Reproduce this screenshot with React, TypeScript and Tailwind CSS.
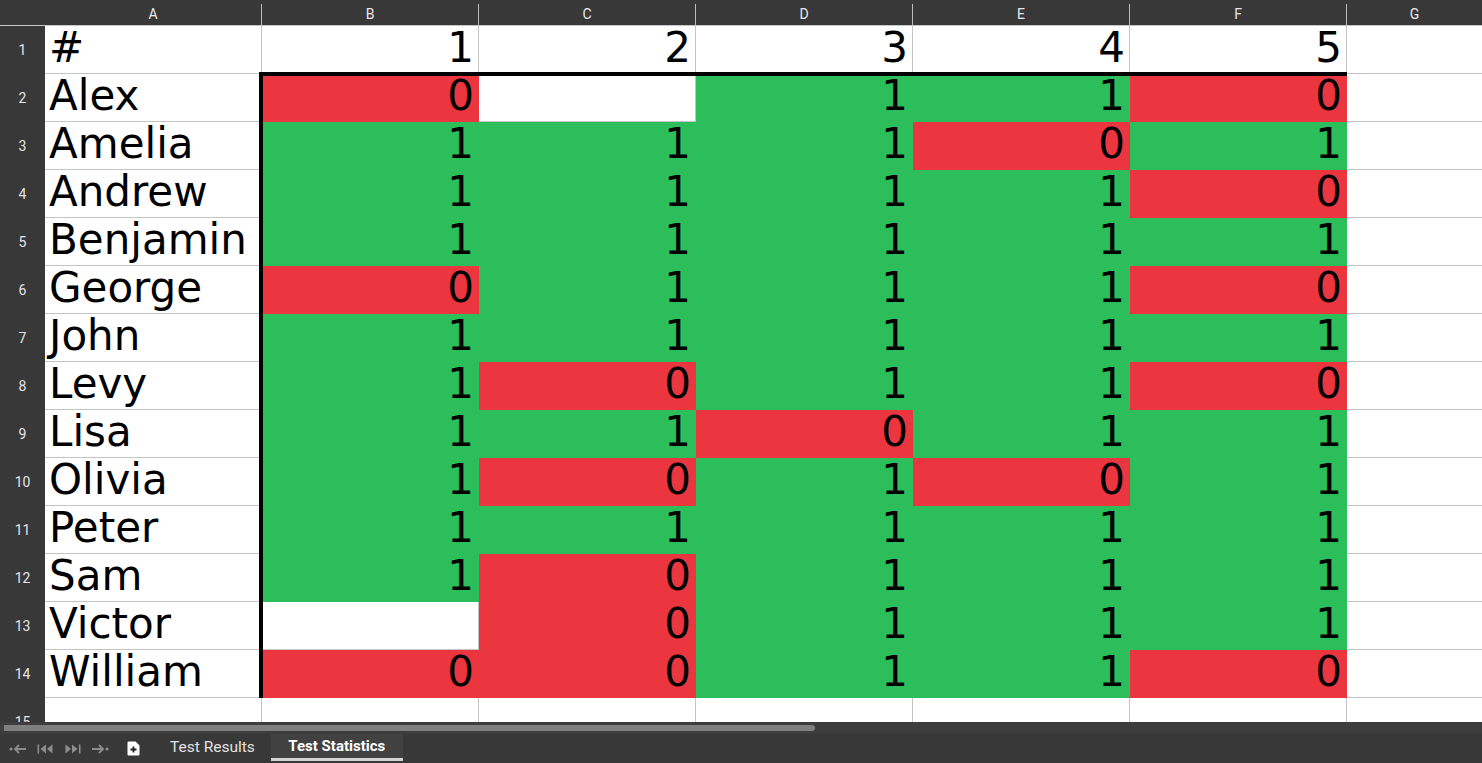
import React from "react";

type Mark = "R" | "G" | "W";

const columns = ["A", "B", "C", "D", "E", "F", "G"];

const people: { name: string; cells: [string, Mark][] }[] = [
  { name: "Alex", cells: [["0", "R"], ["", "W"], ["1", "G"], ["1", "G"], ["0", "R"]] },
  { name: "Amelia", cells: [["1", "G"], ["1", "G"], ["1", "G"], ["0", "R"], ["1", "G"]] },
  { name: "Andrew", cells: [["1", "G"], ["1", "G"], ["1", "G"], ["1", "G"], ["0", "R"]] },
  { name: "Benjamin", cells: [["1", "G"], ["1", "G"], ["1", "G"], ["1", "G"], ["1", "G"]] },
  { name: "George", cells: [["0", "R"], ["1", "G"], ["1", "G"], ["1", "G"], ["0", "R"]] },
  { name: "John", cells: [["1", "G"], ["1", "G"], ["1", "G"], ["1", "G"], ["1", "G"]] },
  { name: "Levy", cells: [["1", "G"], ["0", "R"], ["1", "G"], ["1", "G"], ["0", "R"]] },
  { name: "Lisa", cells: [["1", "G"], ["1", "G"], ["0", "R"], ["1", "G"], ["1", "G"]] },
  { name: "Olivia", cells: [["1", "G"], ["0", "R"], ["1", "G"], ["0", "R"], ["1", "G"]] },
  { name: "Peter", cells: [["1", "G"], ["1", "G"], ["1", "G"], ["1", "G"], ["1", "G"]] },
  { name: "Sam", cells: [["1", "G"], ["0", "R"], ["1", "G"], ["1", "G"], ["1", "G"]] },
  { name: "Victor", cells: [["", "W"], ["0", "R"], ["1", "G"], ["1", "G"], ["1", "G"]] },
  { name: "William", cells: [["0", "R"], ["0", "R"], ["1", "G"], ["1", "G"], ["0", "R"]] },
];

const cellFont = { fontFamily: "'DejaVu Sans', sans-serif" };
const uiFont = { fontFamily: "Roboto, 'Liberation Sans', sans-serif" };

function markClass(mark: Mark) {
  if (mark === "R") return "bg-[#eb3640] border-[#eb3640]";
  if (mark === "G") return "bg-[#2bbe5a] border-[#2bbe5a]";
  return "bg-white border-[#c4c4c4]";
}

function RowNumber({ n }: { n: number }) {
  return (
    <div className="flex h-[48px] w-[45px] shrink-0 items-center justify-center bg-[#383838] text-[14px] text-[#e4e4e4]" style={uiFont}>
      {n}
    </div>
  );
}

function Cell({ text, mark = "W", align = "right" }: { text: string; mark?: Mark; align?: "left" | "right" }) {
  return (
    <div
      className={`h-[48px] w-[217px] shrink-0 border-r border-b whitespace-nowrap text-[42px] leading-[44px] text-black ${markClass(mark)} ${
        align === "right" ? "pr-1 text-right" : "pl-1 text-left"
      }`}
      style={cellFont}
    >
      {text}
    </div>
  );
}

function EmptyTail() {
  return <div className="h-[48px] flex-1 border-b border-[#c4c4c4] bg-white" />;
}

function NavIcon({ kind }: { kind: "first" | "prevEnd" | "nextEnd" | "last" }) {
  const c = "#8c8c8c";
  if (kind === "first")
    return (
      <svg width="18" height="12" viewBox="0 0 18 12">
        <circle cx="2" cy="6" r="1.6" fill={c} />
        <path d="M17 6H6M10 2L6 6l4 4" stroke={c} strokeWidth="1.8" fill="none" />
      </svg>
    );
  if (kind === "prevEnd")
    return (
      <svg width="17" height="12" viewBox="0 0 17 12">
        <rect x="0.5" y="1.5" width="1.6" height="9" fill={c} />
        <path d="M9 1.5v9L3.5 6z M15.5 1.5v9L10 6z" fill={c} />
      </svg>
    );
  if (kind === "nextEnd")
    return (
      <svg width="17" height="12" viewBox="0 0 17 12">
        <path d="M1.5 1.5v9L7 6z M8 1.5v9L13.5 6z" fill={c} />
        <rect x="14.9" y="1.5" width="1.6" height="9" fill={c} />
      </svg>
    );
  return (
    <svg width="18" height="12" viewBox="0 0 18 12">
      <path d="M1 6h11M8 2l4 4-4 4" stroke={c} strokeWidth="1.8" fill="none" />
      <circle cx="16" cy="6" r="1.6" fill={c} />
    </svg>
  );
}

export default function App() {
  return (
    <div className="flex h-[763px] w-[1482px] flex-col overflow-hidden bg-[#383838]">
      <div className="relative h-[722px] shrink-0 overflow-hidden bg-white">
        {/* column headers */}
        <div className="flex h-[26px] items-end border-b border-[#c8c8c8] bg-[#383838]">
          <div className="h-[22px] w-[45px] shrink-0" />
          {columns.map((col, i) => (
            <div
              key={col}
              className={`flex h-[21px] items-center justify-center text-[14px] text-[#e8e8e8] ${
                i === columns.length - 1 ? "flex-1" : "w-[217px] shrink-0 border-r border-[#bdbdbd]"
              }`}
              style={uiFont}
            >
              {col}
            </div>
          ))}
        </div>

        {/* header row */}
        <div className="flex">
          <RowNumber n={1} />
          <Cell text="#" align="left" />
          {["1", "2", "3", "4", "5"].map((h) => (
            <Cell key={h} text={h} />
          ))}
          <EmptyTail />
        </div>

        {people.map((p, i) => (
          <div key={p.name} className="flex">
            <RowNumber n={i + 2} />
            <Cell text={p.name} align="left" />
            {p.cells.map(([v, m], j) => (
              <Cell key={j} text={v} mark={m} />
            ))}
            <EmptyTail />
          </div>
        ))}

        <div className="flex">
          <RowNumber n={15} />
          <Cell text="" align="left" />
          {[0, 1, 2, 3, 4].map((k) => (
            <Cell key={k} text="" />
          ))}
          <EmptyTail />
        </div>

        {/* selection border around the results */}
        <div className="pointer-events-none absolute top-[72px] left-[259px] h-[626px] w-[1088px] border-t-4 border-l-4 border-black" />
      </div>

      {/* horizontal scrollbar */}
      <div className="flex h-[12px] shrink-0 items-center bg-[#3d3d3d] pl-[4px]">
        <div className="h-[6px] w-[811px] rounded-r-[3px] bg-[#7f7f7f]" />
      </div>

      {/* sheet tabs */}
      <div className="flex h-[29px] shrink-0 items-stretch bg-[#383838]" style={uiFont}>
        <div className="flex items-center gap-[10px] pl-[9px]">
          <NavIcon kind="first" />
          <NavIcon kind="prevEnd" />
          <NavIcon kind="nextEnd" />
          <NavIcon kind="last" />
        </div>
        <div className="ml-[18px] flex items-center">
          <svg width="13" height="15" viewBox="0 0 13 15">
            <path d="M1.5 0.5h7l4 4v9a1 1 0 0 1-1 1h-10a1 1 0 0 1-1-1v-12a1 1 0 0 1 1-1z" fill="#ffffff" />
            <path d="M6.5 5.5v6M3.5 8.5h6" stroke="#222" strokeWidth="1.8" />
          </svg>
        </div>
        <div className="ml-[30px] flex items-center pb-[2px] text-[15.5px] text-[#e2e2e2]">Test Results</div>
        <div className="ml-[16px] flex h-[27px] w-[132px] items-center justify-center border-b-[3px] border-[#d4d4d4] bg-[#414141] text-[15px] font-bold text-white">
          Test Statistics
        </div>
      </div>
    </div>
  );
}
